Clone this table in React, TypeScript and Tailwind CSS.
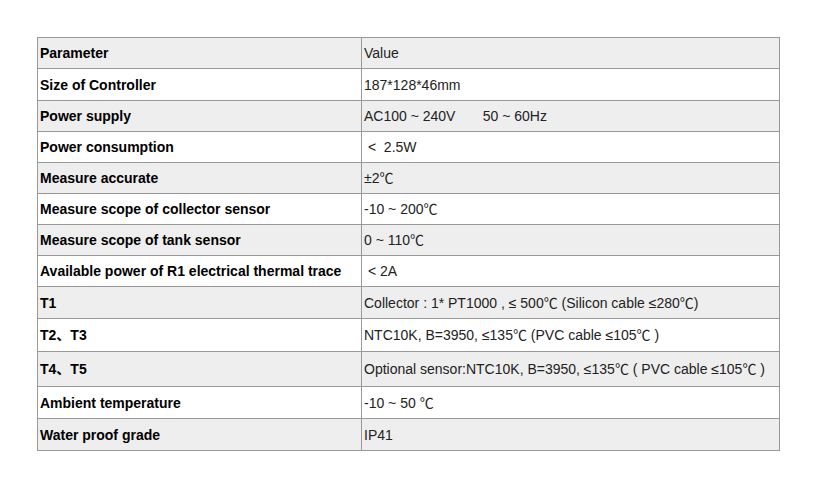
const rows: { name: string; value: string; h: string; gray: boolean }[] = [
  { name: "Parameter", value: "Value", h: "h-[31px]", gray: true },
  { name: "Size of Controller", value: "187*128*46mm", h: "h-[32px]", gray: false },
  { name: "Power supply", value: "AC100 ~ 240V\u00a0\u00a0\u00a0\u00a0\u00a0\u00a0\u00a050 ~ 60Hz", h: "h-[31px]", gray: true },
  { name: "Power consumption", value: "\u00a0<\u00a0 2.5W", h: "h-[31px]", gray: false },
  { name: "Measure accurate", value: "±2℃", h: "h-[31px]", gray: true },
  { name: "Measure scope of collector sensor", value: "-10 ~ 200℃", h: "h-[31px]", gray: false },
  { name: "Measure scope of tank sensor", value: "0 ~ 110℃", h: "h-[31px]", gray: true },
  { name: "Available power of R1 electrical thermal trace", value: "\u00a0< 2A", h: "h-[31px]", gray: false },
  { name: "T1", value: "Collector : 1* PT1000 , ≤ 500℃ (Silicon cable ≤280℃)", h: "h-[32px]", gray: true },
  { name: "T2、T3", value: "NTC10K, B=3950, ≤135℃ (PVC cable ≤105℃ )", h: "h-[33px]", gray: false },
  { name: "T4、T5", value: "Optional sensor:NTC10K, B=3950, ≤135℃ ( PVC cable ≤105℃ )", h: "h-[35px]", gray: true },
  { name: "Ambient temperature", value: "-10 ~ 50 ℃", h: "h-[32px]", gray: false },
  { name: "Water proof grade", value: "IP41", h: "h-[32px]", gray: true },
];

export default function App() {
  return (
    <div className="w-[820px] h-[486px] bg-white pt-[37px] pl-[37px] font-['Liberation_Sans',Arial,'Noto_Sans_CJK_SC',sans-serif] text-[14px] leading-[16px]">
      <div className="w-[743px] border-t border-l border-[#999999]">
        {rows.map((r) => (
          <div key={r.name} className={`flex ${r.h} ${r.gray ? "bg-[#eeeeee]" : "bg-white"}`}>
            <div className="w-[324px] shrink-0 flex items-center px-[2px] border-r border-b border-[#999999] font-bold text-black">
              {r.name}
            </div>
            <div className="flex-1 flex items-center px-[2px] border-r border-b border-[#999999] text-[#222222] whitespace-pre">
              {r.value}
            </div>
          </div>
        ))}
      </div>
    </div>
  );
}
